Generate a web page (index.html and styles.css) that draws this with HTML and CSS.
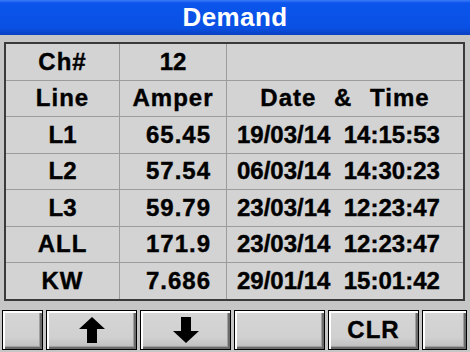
FILE: index.html
```html
<!DOCTYPE html>
<html>
<head>
<meta charset="utf-8">
<link rel="stylesheet" href="styles.css">
</head>
<body>
<div class="screen">
  <div class="title">Demand</div>
  <div class="table">
    <div class="cell c ls">Ch#</div><div class="cell c">12</div><div class="cell"></div>
    <div class="cell c ls">Line</div><div class="cell c ls">Amper</div><div class="cell c hdr">Date &amp; Time</div>
    <div class="cell c">L1</div><div class="cell r">65.45</div><div class="cell dt">19/03/14  14:15:53</div>
    <div class="cell c">L2</div><div class="cell r">57.54</div><div class="cell dt">06/03/14  14:30:23</div>
    <div class="cell c">L3</div><div class="cell r">59.79</div><div class="cell dt">23/03/14  12:23:47</div>
    <div class="cell c ls">ALL</div><div class="cell r">171.9</div><div class="cell dt">23/03/14  12:23:47</div>
    <div class="cell c ls">KW</div><div class="cell r">7.686</div><div class="cell dt">29/01/14  15:01:42</div>
  </div>
  <div class="buttons">
    <div class="btn small"></div>
    <div class="btn"><svg class="arrow" viewBox="0 0 26 26"><polygon points="13,0 26,12 18,12 18,26 8,26 8,12 0,12" fill="#000"/></svg></div>
    <div class="btn"><svg class="arrow" viewBox="0 0 26 26"><polygon points="13,26 26,14 18,14 18,0 8,0 8,14 0,14" fill="#000"/></svg></div>
    <div class="btn"></div>
    <div class="btn ls">CLR</div>
    <div class="btn small2"></div>
  </div>
</div>
</body>
</html>
```
FILE: styles.css
```css
html, body {
  margin: 0;
  padding: 0;
}
body {
  width: 470px;
  height: 352px;
  overflow: hidden;
  background: #c6c6c6;
  font-family: "Liberation Sans", Arial, sans-serif;
  font-weight: bold;
  color: #000;
}
.screen {
  display: flex;
  flex-direction: column;
  width: 470px;
  height: 352px;
}
.title {
  height: 35px;
  background: linear-gradient(#3c7cf8 0, #0b55ec 3px, #0a50e4 80%, #0940c0 100%);
  color: #fff;
  font-size: 26px;
  line-height: 35px;
  text-align: center;
  letter-spacing: 0.4px;
}
.table {
  margin: 7px 0 0 4px;
  width: 457px;
  border: 2px solid #3a3a3a;
  display: grid;
  grid-template-columns: 113px 106px 236px;
  grid-template-rows: repeat(7, 35.5px);
  gap: 1px;
  background: #9c9c9c;
}
.cell {
  background: #d3d3d3;
  font-size: 24px;
  display: flex;
  align-items: center;
  white-space: pre;
  -webkit-text-stroke: 0.4px #000;
}
.c { justify-content: center; }
.ls { letter-spacing: 1px; }
.r { justify-content: flex-end; padding-right: 15px; letter-spacing: 1px; }
.dt { padding-left: 10px; }
.hdr { word-spacing: 10px; letter-spacing: 1px; }
.buttons {
  margin: 9px 0 0 2px;
  display: flex;
  gap: 3px;
  height: 40px;
}
.btn {
  width: 91px;
  box-sizing: border-box;
  border: 1px solid #000;
  background: linear-gradient(#d6d6d6 0, #d0d0d0 70%, #bcbcbc 100%);
  box-shadow: inset 2px 2px 0 #fff, inset -2px -2px 0 #6a6a6a, inset -3px -3px 0 #a0a0a0;
  display: flex;
  align-items: center;
  justify-content: center;
  font-size: 24px;
  -webkit-text-stroke: 0.4px #000;
}
.small { width: 41px; }
.small2 { width: 45px; }
.arrow {
  width: 26px;
  height: 26px;
}
```
